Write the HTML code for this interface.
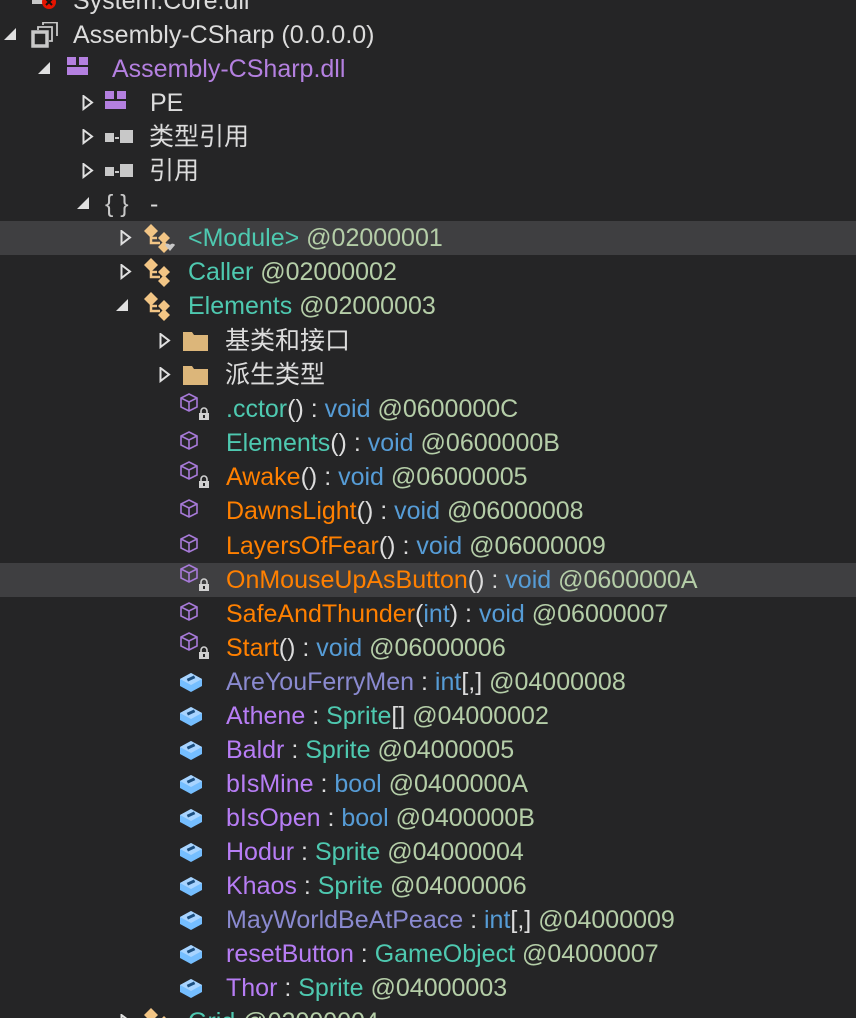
<!DOCTYPE html>
<html><head><meta charset="utf-8"><style>
html,body{margin:0;width:856px;height:1018px;overflow:hidden}
body{background:#252526;position:relative;font-family:"Liberation Sans","Noto Sans CJK SC",sans-serif;font-size:25px;color:#dcdcdc}
.r{position:absolute;left:0;width:856px;height:34px;line-height:34px;white-space:nowrap}
.hl{background:#3f3f41}
.t{position:absolute;top:0}
svg{position:absolute}
.ty{color:#4ec9b0}.kw{color:#569cd6}.tk{color:#b5cea8}.m{color:#ff8000}.f{color:#b77df5}.sf{color:#8a8ad0}.asm{color:#b480e0}
</style></head><body>
<svg width="0" height="0" style="position:absolute">
<defs>
<g id="exp"><polygon points="12,0 12,12 0,12" fill="#e0e0e0"/></g>
<g id="col"><polygon points="1.5,1 10,7.5 1.5,14" fill="none" stroke="#e0e0e0" stroke-width="2"/></g>
<g id="cls"><path d="M9,8 V20 H18 M9,15 H15" stroke="#f2c585" stroke-width="2.5" fill="none"/><polygon points="9,1 16,8 9,15 2,8" fill="#f2c585"/><polygon points="22,9 28,15 22,21 16,15" fill="#f2c585"/><polygon points="22,18 28,24 22,30 16,24" fill="#f2c585"/></g>
<g id="mth"><path d="M9,1 L17,5 V14 L9,18 L1,14 V5 Z M1,5 L9,9 L17,5 M9,9 V18" fill="none" stroke="#a77ad8" stroke-width="1.6"/></g>
<g id="lck"><path d="M3,6 V4 A3,3 0 0 1 9,4 V6" fill="none" stroke="#d0d0d0" stroke-width="1.6"/><rect x="1" y="6" width="10" height="7" fill="#d0d0d0"/><rect x="5" y="8" width="2" height="3" fill="#252526"/></g>
<g id="fld"><polygon points="1,8 12,2 23,8 23,15 12,21 1,15" fill="#75beff"/><polygon points="1,8 12,2 23,8 12,14" fill="#a8d4ff"/><rect x="8" y="6" width="8" height="3" fill="#1c4f80" transform="rotate(-25 12 7.5)"/></g>
<g id="fold"><path d="M0,3 H9 L11,6 H25 V22 H0 Z" fill="#dcb67a"/></g>
<g id="ref"><rect x="0" y="5" width="9" height="9" fill="#c8c8c8"/><rect x="10" y="9" width="4" height="2" fill="#c8c8c8"/><rect x="15" y="2" width="13" height="13" fill="#c8c8c8"/></g>
<g id="mod"><rect x="0" y="0" width="9" height="8" fill="#b480e0"/><rect x="12" y="0" width="9" height="8" fill="#b480e0"/><rect x="0" y="10" width="21" height="8" fill="#b480e0"/></g>
</defs></svg>

<div class="r" style="top:-16px"><svg style="left:32px;top:4px" width="30" height="26"><path d="M2,0 V14 H12" stroke="#c8c8c8" stroke-width="4" fill="none"/><circle cx="17" cy="14" r="7" fill="#e51400"/><path d="M14,11 L20,17 M20,11 L14,17" stroke="#111" stroke-width="2"/></svg><span class="t" style="left:73px">System.Core.dll</span></div>

<div class="r" style="top:18px"><svg style="left:4px;top:10px" width="14" height="14"><use href="#exp"/></svg><svg style="left:31px;top:4px" width="28" height="26"><rect x="2" y="10" width="14" height="14" fill="none" stroke="#c8c8c8" stroke-width="3.5"/><path d="M7,8 V5 H21 V19 H18 M12,3 V0.5 H26 V14" fill="none" stroke="#c8c8c8" stroke-width="1.8"/></svg><span class="t" style="left:73px">Assembly-CSharp (0.0.0.0)</span></div>

<div class="r" style="top:52px"><svg style="left:38px;top:10px" width="14" height="14"><use href="#exp"/></svg><svg style="left:67px;top:5px" width="24" height="20"><use href="#mod"/></svg><span class="t asm" style="left:112px">Assembly-CSharp.dll</span></div>

<div class="r" style="top:86px"><svg style="left:82px;top:9px" width="14" height="16"><use href="#col"/></svg><svg style="left:105px;top:5px" width="24" height="20"><use href="#mod"/></svg><span class="t" style="left:150px">PE</span></div>
<div class="r" style="top:120px"><svg style="left:82px;top:9px" width="14" height="16"><use href="#col"/></svg><svg style="left:105px;top:8px" width="30" height="18"><use href="#ref"/></svg><span class="t" style="left:149px">类型引用</span></div>
<div class="r" style="top:154px"><svg style="left:82px;top:9px" width="14" height="16"><use href="#col"/></svg><svg style="left:105px;top:8px" width="30" height="18"><use href="#ref"/></svg><span class="t" style="left:149px">引用</span></div>
<div class="r" style="top:187px"><svg style="left:77px;top:10px" width="14" height="14"><use href="#exp"/></svg><span class="t" style="left:105px;color:#c8c8c8">{ }</span><span class="t" style="left:150px">-</span></div>

<div class="r hl" style="top:221px"><svg style="left:120px;top:9px" width="14" height="16"><use href="#col"/></svg><svg style="left:142px;top:2px" width="34" height="32"><use href="#cls"/><path d="M23,22 a3,3 0 0 1 5,0 a3,3 0 0 1 5,0 l-5,6 z" fill="#c8c8c8"/></svg><span class="t" style="left:188px"><span class="ty">&lt;Module&gt;</span> <span class="tk">@02000001</span></span></div>
<div class="r" style="top:255px"><svg style="left:142px;top:2px" width="30" height="32"><use href="#cls"/></svg><svg style="left:120px;top:9px" width="14" height="16"><use href="#col"/></svg><span class="t" style="left:188px"><span class="ty">Caller</span> <span class="tk">@02000002</span></span></div>
<div class="r" style="top:289px"><svg style="left:116px;top:10px" width="14" height="14"><use href="#exp"/></svg><svg style="left:142px;top:2px" width="30" height="32"><use href="#cls"/></svg><span class="t" style="left:188px"><span class="ty">Elements</span> <span class="tk">@02000003</span></span></div>

<div class="r" style="top:324px"><svg style="left:159px;top:9px" width="14" height="16"><use href="#col"/></svg><svg style="left:183px;top:5px" width="26" height="24"><use href="#fold"/></svg><span class="t" style="left:225px">基类和接口</span></div>
<div class="r" style="top:358px"><svg style="left:159px;top:9px" width="14" height="16"><use href="#col"/></svg><svg style="left:183px;top:5px" width="26" height="24"><use href="#fold"/></svg><span class="t" style="left:225px">派生类型</span></div>

<div class="r" style="top:392px"><svg style="left:180px;top:1px" width="20" height="20"><use href="#mth"/></svg><svg style="left:198px;top:15px" width="12" height="14"><use href="#lck"/></svg><span class="t" style="left:226px"><span class="ty">.cctor</span>() : <span class="kw">void</span> <span class="tk">@0600000C</span></span></div>
<div class="r" style="top:426px"><svg style="left:180px;top:5px" width="20" height="20"><use href="#mth"/></svg><span class="t" style="left:226px"><span class="ty">Elements</span>() : <span class="kw">void</span> <span class="tk">@0600000B</span></span></div>
<div class="r" style="top:460px"><svg style="left:180px;top:1px" width="20" height="20"><use href="#mth"/></svg><svg style="left:198px;top:15px" width="12" height="14"><use href="#lck"/></svg><span class="t" style="left:226px"><span class="m">Awake</span>() : <span class="kw">void</span> <span class="tk">@06000005</span></span></div>
<div class="r" style="top:494px"><svg style="left:180px;top:5px" width="20" height="20"><use href="#mth"/></svg><span class="t" style="left:226px"><span class="m">DawnsLight</span>() : <span class="kw">void</span> <span class="tk">@06000008</span></span></div>
<div class="r" style="top:529px"><svg style="left:180px;top:5px" width="20" height="20"><use href="#mth"/></svg><span class="t" style="left:226px"><span class="m">LayersOfFear</span>() : <span class="kw">void</span> <span class="tk">@06000009</span></span></div>
<div class="r hl" style="top:563px"><svg style="left:180px;top:1px" width="20" height="20"><use href="#mth"/></svg><svg style="left:198px;top:15px" width="12" height="14"><use href="#lck"/></svg><span class="t" style="left:226px"><span class="m">OnMouseUpAsButton</span>() : <span class="kw">void</span> <span class="tk">@0600000A</span></span></div>
<div class="r" style="top:597px"><svg style="left:180px;top:5px" width="20" height="20"><use href="#mth"/></svg><span class="t" style="left:226px"><span class="m">SafeAndThunder</span>(<span class="kw">int</span>) : <span class="kw">void</span> <span class="tk">@06000007</span></span></div>
<div class="r" style="top:631px"><svg style="left:180px;top:1px" width="20" height="20"><use href="#mth"/></svg><svg style="left:198px;top:15px" width="12" height="14"><use href="#lck"/></svg><span class="t" style="left:226px"><span class="m">Start</span>() : <span class="kw">void</span> <span class="tk">@06000006</span></span></div>

<div class="r" style="top:665px"><svg style="left:179px;top:6px" width="24" height="22"><use href="#fld"/></svg><span class="t" style="left:226px"><span class="sf">AreYouFerryMen</span> : <span class="kw">int</span>[,] <span class="tk">@04000008</span></span></div>
<div class="r" style="top:699px"><svg style="left:179px;top:6px" width="24" height="22"><use href="#fld"/></svg><span class="t" style="left:226px"><span class="f">Athene</span> : <span class="ty">Sprite</span>[] <span class="tk">@04000002</span></span></div>
<div class="r" style="top:733px"><svg style="left:179px;top:6px" width="24" height="22"><use href="#fld"/></svg><span class="t" style="left:226px"><span class="f">Baldr</span> : <span class="ty">Sprite</span> <span class="tk">@04000005</span></span></div>
<div class="r" style="top:767px"><svg style="left:179px;top:6px" width="24" height="22"><use href="#fld"/></svg><span class="t" style="left:226px"><span class="f">bIsMine</span> : <span class="kw">bool</span> <span class="tk">@0400000A</span></span></div>
<div class="r" style="top:801px"><svg style="left:179px;top:6px" width="24" height="22"><use href="#fld"/></svg><span class="t" style="left:226px"><span class="f">bIsOpen</span> : <span class="kw">bool</span> <span class="tk">@0400000B</span></span></div>
<div class="r" style="top:835px"><svg style="left:179px;top:6px" width="24" height="22"><use href="#fld"/></svg><span class="t" style="left:226px"><span class="f">Hodur</span> : <span class="ty">Sprite</span> <span class="tk">@04000004</span></span></div>
<div class="r" style="top:869px"><svg style="left:179px;top:6px" width="24" height="22"><use href="#fld"/></svg><span class="t" style="left:226px"><span class="f">Khaos</span> : <span class="ty">Sprite</span> <span class="tk">@04000006</span></span></div>
<div class="r" style="top:903px"><svg style="left:179px;top:6px" width="24" height="22"><use href="#fld"/></svg><span class="t" style="left:226px"><span class="sf">MayWorldBeAtPeace</span> : <span class="kw">int</span>[,] <span class="tk">@04000009</span></span></div>
<div class="r" style="top:937px"><svg style="left:179px;top:6px" width="24" height="22"><use href="#fld"/></svg><span class="t" style="left:226px"><span class="f">resetButton</span> : <span class="ty">GameObject</span> <span class="tk">@04000007</span></span></div>
<div class="r" style="top:971px"><svg style="left:179px;top:6px" width="24" height="22"><use href="#fld"/></svg><span class="t" style="left:226px"><span class="f">Thor</span> : <span class="ty">Sprite</span> <span class="tk">@04000003</span></span></div>
<div class="r" style="top:1005px"><svg style="left:120px;top:9px" width="14" height="16"><use href="#col"/></svg><svg style="left:142px;top:2px" width="30" height="32"><use href="#cls"/></svg><span class="t" style="left:188px"><span class="ty">Grid</span> <span class="tk">@02000004</span></span></div>
</body></html>
